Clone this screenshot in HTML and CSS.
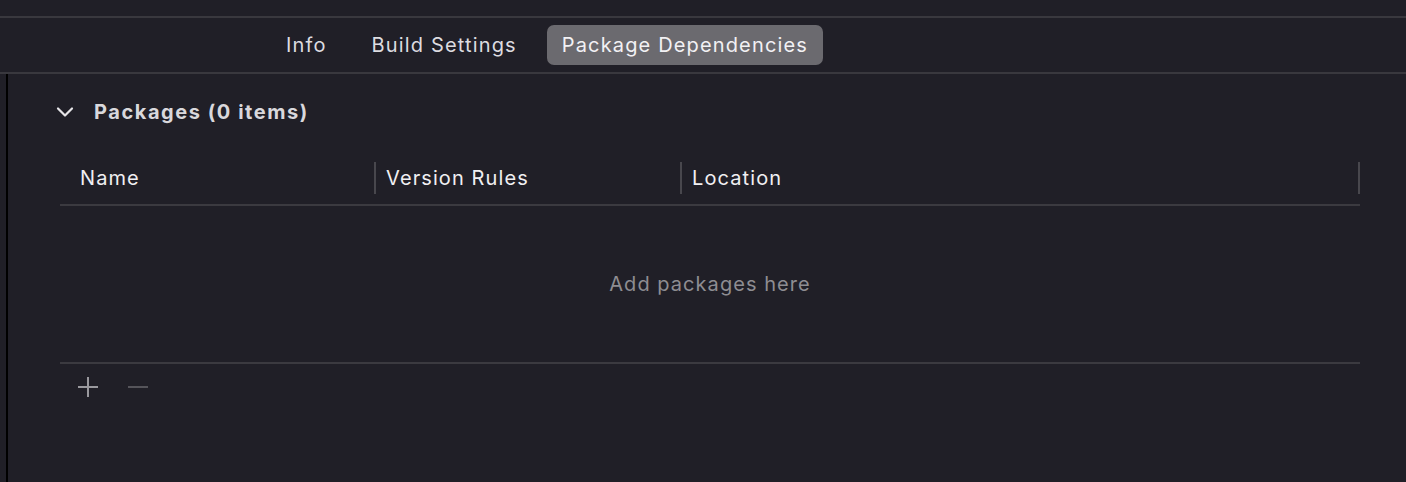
FILE: index.html
```html
<!DOCTYPE html>
<html>
<head>
<meta charset="utf-8">
<link rel="stylesheet" href="styles.css">
</head>
<body>
<div class="topbar"></div>
<div class="tabbar">
  <div class="tab">Info</div>
  <div class="tab">Build Settings</div>
  <div class="tab selected">Package Dependencies</div>
</div>
<div class="main">
  <div class="section-head">
    <svg class="chevron" width="20" height="12" viewBox="0 0 20 12"><path d="M3 2.5 L10 9.5 L17 2.5" fill="none" stroke="#e6e5e8" stroke-width="2.2" stroke-linecap="round" stroke-linejoin="round"/></svg>
    <span class="section-title">Packages (0 items)</span>
  </div>
  <div class="table">
    <div class="thead">
      <div class="th th-name">Name</div>
      <div class="th th-ver">Version Rules</div>
      <div class="th th-loc">Location</div>
    </div>
    <div class="tbody">Add packages here</div>
    <div class="tools">
      <svg class="tool" width="22" height="22" viewBox="0 0 22 22"><path d="M11 1 V21 M1 11 H21" stroke="#9a999e" stroke-width="2"/></svg>
      <svg class="tool dim" width="22" height="22" viewBox="0 0 22 22"><path d="M1 11 H21" stroke="#55545a" stroke-width="2"/></svg>
    </div>
  </div>
</div>
</body>
</html>
```
FILE: styles.css
```css
html, body {
  margin: 0;
  padding: 0;
  background: #201f27;
  height: 100%;
  overflow: hidden;
  font-family: Inter, "Noto Sans", sans-serif;
}
body {
  display: flex;
  flex-direction: column;
}
.topbar {
  height: 16px;
  flex: none;
  border-bottom: 2px solid #39383e;
}
.tabbar {
  flex: none;
  height: 54px;
  border-bottom: 2px solid #39383e;
  display: flex;
  align-items: center;
  padding-left: 271px;
  gap: 15px;
}
.tab {
  font-size: 20px;
  color: #dddce0;
  padding: 0 15px;
  height: 40px;
  line-height: 40px;
  border-radius: 7px;
  letter-spacing: 1.15px;
}
.tab.selected {
  background: #6b6a6f;
  color: #f2f1f4;
}
.main {
  flex: 1;
  margin-left: 6px;
  border-left: 2px solid #000;
  padding: 18px 46px 0 52px;
}
.section-head {
  display: flex;
  align-items: center;
  height: 40px;
}
.chevron {
  margin-left: -5px;
  margin-right: 19px;
}
.section-title {
  font-size: 20px;
  font-weight: 700;
  color: #d9d8dc;
  letter-spacing: 1.55px;
}
.table {
  margin-top: 29px;
}
.thead {
  display: flex;
  align-items: flex-start;
  height: 45px;
  padding-top: 1px;
  box-sizing: border-box;
  border-bottom: 2px solid #3b3a40;
}
.th {
  font-size: 20px;
  color: #f0eff2;
  height: 32px;
  line-height: 32px;
  box-sizing: border-box;
  letter-spacing: 1.1px;
}
.th-name {
  width: 316px;
  padding-left: 20px;
  border-right: 2px solid #48474d;
}
.th-ver {
  width: 306px;
  padding-left: 10px;
  border-right: 2px solid #48474d;
}
.th-loc {
  flex: 1;
  padding-left: 10px;
  border-right: 2px solid #48474d;
}
.tbody {
  height: 156px;
  border-bottom: 2px solid #3b3a40;
  display: flex;
  align-items: center;
  justify-content: center;
  font-size: 20px;
  color: #8e8d92;
  letter-spacing: 1.05px;
}
.tools {
  display: flex;
  align-items: center;
  gap: 28px;
  padding-left: 17px;
  margin-top: 12px;
}
```
